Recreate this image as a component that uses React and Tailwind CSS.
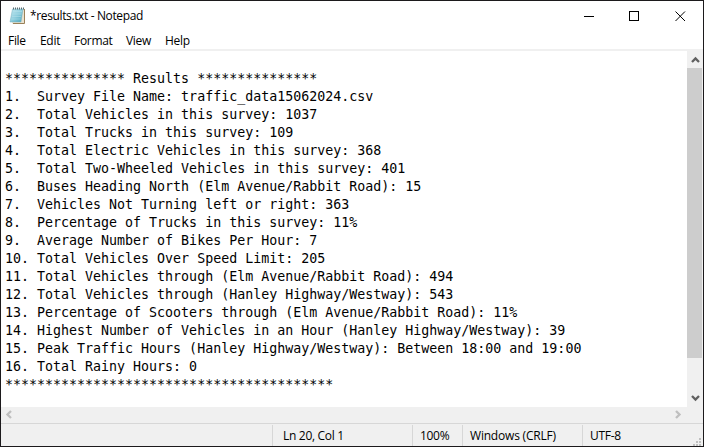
const lines = [
  '',
  '*************** Results ***************',
  '1.  Survey File Name: traffic_data15062024.csv',
  '2.  Total Vehicles in this survey: 1037',
  '3.  Total Trucks in this survey: 109',
  '4.  Total Electric Vehicles in this survey: 368',
  '5.  Total Two-Wheeled Vehicles in this survey: 401',
  '6.  Buses Heading North (Elm Avenue/Rabbit Road): 15',
  '7.  Vehicles Not Turning left or right: 363',
  '8.  Percentage of Trucks in this survey: 11%',
  '9.  Average Number of Bikes Per Hour: 7',
  '10. Total Vehicles Over Speed Limit: 205',
  '11. Total Vehicles through (Elm Avenue/Rabbit Road): 494',
  '12. Total Vehicles through (Hanley Highway/Westway): 543',
  '13. Percentage of Scooters through (Elm Avenue/Rabbit Road): 11%',
  '14. Highest Number of Vehicles in an Hour (Hanley Highway/Westway): 39',
  '15. Peak Traffic Hours (Hanley Highway/Westway): Between 18:00 and 19:00',
  '16. Total Rainy Hours: 0',
  '*****************************************',
];

function NotepadIcon() {
  return (
    <svg width="17" height="18" viewBox="0 0 17 18" className="shrink-0">
      <defs>
        <linearGradient id="page" x1="0" y1="0" x2="1" y2="1">
          <stop offset="0" stopColor="#c4e8f0" />
          <stop offset="0.5" stopColor="#8fcede" />
          <stop offset="1" stopColor="#4aa5bd" />
        </linearGradient>
      </defs>
      <path d="M4 2H15.5V16.5H3Z" fill="#e9e2d0" />
      <path d="M15.5 2V16.5H4" fill="none" stroke="#9a8159" />
      <path d="M3.5 2H14L12 15H1Z" fill="url(#page)" stroke="#72afbf" strokeWidth="0.5" />
      <path d="M4 4.5H13M3.5 7H12.5M3 9.5H12M2.5 12H11.5" stroke="#b6e2eb" strokeWidth="0.5" />
      <path d="M4 1.5H15" stroke="#596b71" strokeWidth="2" strokeDasharray="1 1" />
    </svg>
  );
}

function Chevron({ className, d }) {
  return (
    <svg width="9" height="9" viewBox="0 0 9 9" className={className}>
      <path d={d} fill="none" stroke="currentColor" strokeWidth="2.3" />
    </svg>
  );
}

export default function App() {
  return (
    <div className="flex h-[447px] w-[704px] flex-col overflow-hidden border border-[#1c1a1c] bg-white font-['Open_Sans','Noto_Sans',sans-serif] text-[12px] tracking-[-0.3px] text-black">
      <header className="flex h-[30px] shrink-0 items-center pl-2">
        <NotepadIcon />
        <span className="ml-1 grow whitespace-pre tracking-[-0.37px]">*results.txt - Notepad</span>
        <svg width="120" height="13" viewBox="0 0 120 13" className="mr-2 shrink-0" fill="none" stroke="#000">
          <path d="M9 6.5H19" shapeRendering="crispEdges" />
          <rect x="54.5" y="1.5" width="9" height="9" shapeRendering="crispEdges" />
          <path d="M100.5 1.5L110 11M110 1.5L100.5 11" />
        </svg>
      </header>
      <nav className="flex h-5 shrink-0 items-center border-b-2 border-[#f0f0f0] pl-[7px] pt-0.5">
        <span className="w-8">File</span>
        <span className="w-[34px]">Edit</span>
        <span className="w-[52px]">Format</span>
        <span className="w-[39px]">View</span>
        <span>Help</span>
      </nav>
      <main className="flex h-[356px] shrink-0">
        <div className="grow overflow-hidden pl-1 pt-px font-['DejaVu_Sans_Mono',monospace] text-[13.305px] leading-[18px] tracking-normal">
          {lines.map((line, i) => (
            <div key={i} className="h-[18px] whitespace-pre">{line}</div>
          ))}
        </div>
        <div className="flex w-4 shrink-0 flex-col items-center bg-[#f0f0f0]">
          <div className="flex h-[17px] items-center pt-px text-[#606060]">
            <Chevron d="M1 6L4.5 2.5L8 6" />
          </div>
          <div className="mr-px h-[290px] w-[15px] bg-[#cdcdcd]" />
          <div className="flex grow items-center pt-[30px] text-[#606060]">
            <Chevron d="M1 3L4.5 6.5L8 3" />
          </div>
        </div>
      </main>
      <div className="flex h-4 shrink-0 items-center justify-between bg-[#f0f0f0] pb-px pl-1 pr-[21px] text-[#bfbfbf]">
        <Chevron d="M6 1L2.5 4.5L6 8" />
        <Chevron d="M3 1L6.5 4.5L3 8" />
      </div>
      <footer className="flex grow items-stretch border-t border-[#d7d7d7] bg-[#f0f0f0] pb-px pt-px leading-[22px]">
        <div className="w-[271px]" />
        <div className="w-[140px] border-l border-[#d7d7d7] pl-[10px]">Ln 20, Col 1</div>
        <div className="w-[50px] border-l border-[#d7d7d7] pl-[7px]">100%</div>
        <div className="w-[120px] border-l border-[#d7d7d7] pl-[7px] tracking-[-0.2px]">Windows (CRLF)</div>
        <div className="grow border-l border-[#d7d7d7] pl-[7px]">UTF-8</div>
        <svg width="8" height="8" viewBox="0 0 8 8" className="mb-px mr-0.5 self-end" fill="#bfbfbf" shapeRendering="crispEdges">
          <path d="M6 0h2v2H6zM3 3h2v2H3zM6 3h2v2H6zM0 6h2v2H0zM3 6h2v2H3zM6 6h2v2H6z" />
        </svg>
      </footer>
    </div>
  );
}
